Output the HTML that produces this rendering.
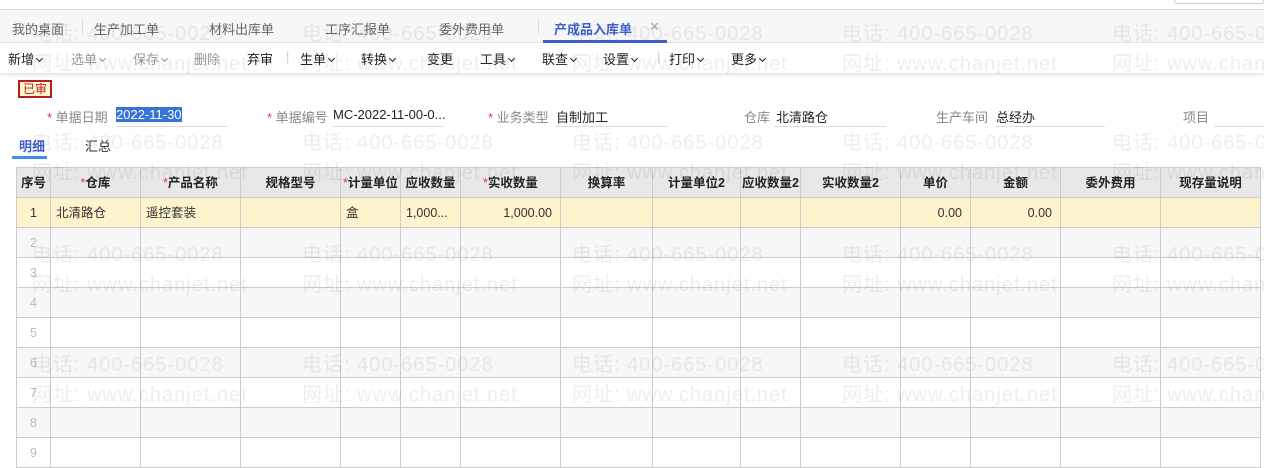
<!DOCTYPE html>
<html><head><meta charset="utf-8"><style>
*{margin:0;padding:0;box-sizing:border-box}
body{width:1264px;height:450px;overflow:hidden;background:#fff;font-family:"Liberation Sans","Noto Sans CJK SC",sans-serif;font-size:13px;color:#333;position:relative}
.top{position:absolute;left:0;top:0;width:1264px;height:10px;background:#fff;border-bottom:1px solid #ddd}
.top .box{position:absolute;right:0;top:-2px;width:90px;height:6px;border:1px solid #ccc;border-radius:3px}
.tabs{position:absolute;top:10px;left:0;width:1264px;height:33px;background:#f7f7f7;border-bottom:1px solid #e4e4e4}
.tab{position:absolute;top:9px;font-size:13px;color:#666}
.tab.act{color:#3f5fcf;font-weight:bold}
.tabline{position:absolute;left:543px;top:30px;width:124px;height:3px;background:#3f5fcf}
.sep{position:absolute;top:8px;width:1px;height:16px;background:#ddd}
.tool{position:absolute;top:43px;left:0;width:1264px;height:30px;background:#fff;box-shadow:0 2px 3px rgba(0,0,0,.12)}
.tool span{position:absolute;top:6px;font-size:13px;color:#222}
.tool span.dis{color:#999}
.chev{display:inline-block;width:5px;height:5px;border-right:1.3px solid currentColor;border-bottom:1.3px solid currentColor;transform:rotate(45deg);margin-left:3px;position:relative;top:-3px}
.badge{position:absolute;left:18px;top:80px;width:34px;height:18px;border:2px solid #b32020;background:#fdf3d0;color:#c02020;font-size:12px;text-align:center;line-height:14px}
.lbl{position:absolute;top:107px;color:#888;font-size:13px}
.lbl b{color:#e33;font-weight:normal}
.val{position:absolute;top:107px;color:#222;font-size:13px}
.ul{position:absolute;top:126px;height:1px;background:#ddd}
.sel{background:#3874d8;color:#fff}
.st{position:absolute;top:136px;font-size:13px}
table{position:absolute;left:16px;top:167px;border-collapse:collapse;table-layout:fixed}
td,th{border:1px solid #ccc;height:30px;padding:0;font-size:12.5px;line-height:14px;overflow:hidden;white-space:nowrap}
th{background:#e8e8e8;font-weight:bold;color:#222}
th i{color:#e33;font-style:normal;font-weight:normal}
tr.r1 td{background:#fdf3cc}
tr.g td{background:#f7f7f7}
td.n{text-align:center;color:#bbb}
tr.r1 td.n{color:#333}
td.rt{text-align:right;padding-right:8px}
td.l{padding-left:5px}
.wm{position:absolute;color:rgba(0,0,0,.07);font-size:20px;letter-spacing:1px;white-space:nowrap;z-index:5;pointer-events:none}
</style></head><body>
<div class="top"><div class="box"></div></div>
<div class="tabs">
<span class="tab" style="left:12px">我的桌面</span><div class="sep" style="left:82px"></div>
<span class="tab" style="left:94px">生产加工单</span>
<span class="tab" style="left:209px">材料出库单</span>
<span class="tab" style="left:325px">工序汇报单</span>
<span class="tab" style="left:439px">委外费用单</span><div class="sep" style="left:538px"></div>
<span class="tab act" style="left:554px">产成品入库单</span><span class="tab" style="left:649px;color:#aaa">✕</span>
<div class="tabline"></div>
</div>
<div class="tool">
<span style="left:8px">新增<i class="chev"></i></span>
<span class="dis" style="left:71px">选单<i class="chev"></i></span>
<span class="dis" style="left:133px">保存<i class="chev"></i></span>
<span class="dis" style="left:194px">删除</span>
<span style="left:247px">弃审</span>
<span style="left:286px;color:#ccc">|</span>
<span style="left:300px">生单<i class="chev"></i></span>
<span style="left:361px">转换<i class="chev"></i></span>
<span style="left:427px">变更</span>
<span style="left:480px">工具<i class="chev"></i></span>
<span style="left:542px">联查<i class="chev"></i></span>
<span style="left:603px">设置<i class="chev"></i></span>
<span style="left:657px;color:#ccc">|</span>
<span style="left:669px">打印<i class="chev"></i></span>
<span style="left:731px">更多<i class="chev"></i></span>
</div>
<div class="badge">已审</div>
<span class="lbl" style="left:47px"><b>*</b> 单据日期</span><span class="val sel" style="left:116px">2022-11-30</span><div class="ul" style="left:116px;width:112px"></div>
<span class="lbl" style="left:267px"><b>*</b> 单据编号</span><span class="val" style="left:333px">MC-2022-11-00-0...</span><div class="ul" style="left:333px;width:110px"></div>
<span class="lbl" style="left:488px"><b>*</b> 业务类型</span><span class="val" style="left:556px">自制加工</span><div class="ul" style="left:555px;width:112px"></div>
<span class="lbl" style="left:744px">仓库</span><span class="val" style="left:776px">北清路仓</span><div class="ul" style="left:775px;width:111px"></div>
<span class="lbl" style="left:936px">生产车间</span><span class="val" style="left:996px">总经办</span><div class="ul" style="left:995px;width:110px"></div>
<span class="lbl" style="left:1183px">项目</span><div class="ul" style="left:1214px;width:50px"></div>
<span class="st" style="left:19px;color:#3f5fcf;font-weight:bold">明细</span>
<span class="st" style="left:85px;color:#333">汇总</span>
<div style="position:absolute;left:12px;top:156px;width:35px;height:3px;background:#3f8fe8"></div>
<table>
<colgroup><col style="width:34px"><col style="width:90px"><col style="width:100px"><col style="width:100px"><col style="width:60px"><col style="width:60px"><col style="width:100px"><col style="width:92px"><col style="width:88px"><col style="width:60px"><col style="width:100px"><col style="width:70px"><col style="width:90px"><col style="width:100px"><col style="width:100px"></colgroup>
<tr><th>序号</th><th><i>*</i>仓库</th><th><i>*</i>产品名称</th><th>规格型号</th><th><i>*</i>计量单位</th><th>应收数量</th><th><i>*</i>实收数量</th><th>换算率</th><th>计量单位2</th><th>应收数量2</th><th>实收数量2</th><th>单价</th><th>金额</th><th>委外费用</th><th>现存量说明</th></tr>
<tr class="r1"><td class="n">1</td><td class="l">北清路仓</td><td class="l">遥控套装</td><td></td><td class="l">盒</td><td class="l">1,000...</td><td class="rt">1,000.00</td><td></td><td></td><td></td><td></td><td class="rt">0.00</td><td class="rt">0.00</td><td></td><td></td></tr>
<tr class="g"><td class="n">2</td><td></td><td></td><td></td><td></td><td></td><td></td><td></td><td></td><td></td><td></td><td></td><td></td><td></td><td></td></tr>
<tr><td class="n">3</td><td></td><td></td><td></td><td></td><td></td><td></td><td></td><td></td><td></td><td></td><td></td><td></td><td></td><td></td></tr>
<tr class="g"><td class="n">4</td><td></td><td></td><td></td><td></td><td></td><td></td><td></td><td></td><td></td><td></td><td></td><td></td><td></td><td></td></tr>
<tr><td class="n">5</td><td></td><td></td><td></td><td></td><td></td><td></td><td></td><td></td><td></td><td></td><td></td><td></td><td></td><td></td></tr>
<tr class="g"><td class="n">6</td><td></td><td></td><td></td><td></td><td></td><td></td><td></td><td></td><td></td><td></td><td></td><td></td><td></td><td></td></tr>
<tr><td class="n">7</td><td></td><td></td><td></td><td></td><td></td><td></td><td></td><td></td><td></td><td></td><td></td><td></td><td></td><td></td></tr>
<tr class="g"><td class="n">8</td><td></td><td></td><td></td><td></td><td></td><td></td><td></td><td></td><td></td><td></td><td></td><td></td><td></td><td></td></tr>
<tr><td class="n">9</td><td></td><td></td><td></td><td></td><td></td><td></td><td></td><td></td><td></td><td></td><td></td><td></td><td></td><td></td></tr>
</table>
<div class="wm" style="left:32px;top:17px">电话: 400-665-0028</div><div class="wm" style="left:32px;top:47px">网址: www.chanjet.net</div>
<div class="wm" style="left:302px;top:17px">电话: 400-665-0028</div><div class="wm" style="left:302px;top:47px">网址: www.chanjet.net</div>
<div class="wm" style="left:572px;top:17px">电话: 400-665-0028</div><div class="wm" style="left:572px;top:47px">网址: www.chanjet.net</div>
<div class="wm" style="left:842px;top:17px">电话: 400-665-0028</div><div class="wm" style="left:842px;top:47px">网址: www.chanjet.net</div>
<div class="wm" style="left:1112px;top:17px">电话: 400-665-0028</div><div class="wm" style="left:1112px;top:47px">网址: www.chanjet.net</div>
<div class="wm" style="left:32px;top:126px">电话: 400-665-0028</div><div class="wm" style="left:32px;top:156px">网址: www.chanjet.net</div>
<div class="wm" style="left:302px;top:126px">电话: 400-665-0028</div><div class="wm" style="left:302px;top:156px">网址: www.chanjet.net</div>
<div class="wm" style="left:572px;top:126px">电话: 400-665-0028</div><div class="wm" style="left:572px;top:156px">网址: www.chanjet.net</div>
<div class="wm" style="left:842px;top:126px">电话: 400-665-0028</div><div class="wm" style="left:842px;top:156px">网址: www.chanjet.net</div>
<div class="wm" style="left:1112px;top:126px">电话: 400-665-0028</div><div class="wm" style="left:1112px;top:156px">网址: www.chanjet.net</div>
<div class="wm" style="left:32px;top:238px">电话: 400-665-0028</div><div class="wm" style="left:32px;top:268px">网址: www.chanjet.net</div>
<div class="wm" style="left:302px;top:238px">电话: 400-665-0028</div><div class="wm" style="left:302px;top:268px">网址: www.chanjet.net</div>
<div class="wm" style="left:572px;top:238px">电话: 400-665-0028</div><div class="wm" style="left:572px;top:268px">网址: www.chanjet.net</div>
<div class="wm" style="left:842px;top:238px">电话: 400-665-0028</div><div class="wm" style="left:842px;top:268px">网址: www.chanjet.net</div>
<div class="wm" style="left:1112px;top:238px">电话: 400-665-0028</div><div class="wm" style="left:1112px;top:268px">网址: www.chanjet.net</div>
<div class="wm" style="left:32px;top:348px">电话: 400-665-0028</div><div class="wm" style="left:32px;top:378px">网址: www.chanjet.net</div>
<div class="wm" style="left:302px;top:348px">电话: 400-665-0028</div><div class="wm" style="left:302px;top:378px">网址: www.chanjet.net</div>
<div class="wm" style="left:572px;top:348px">电话: 400-665-0028</div><div class="wm" style="left:572px;top:378px">网址: www.chanjet.net</div>
<div class="wm" style="left:842px;top:348px">电话: 400-665-0028</div><div class="wm" style="left:842px;top:378px">网址: www.chanjet.net</div>
<div class="wm" style="left:1112px;top:348px">电话: 400-665-0028</div><div class="wm" style="left:1112px;top:378px">网址: www.chanjet.net</div>
</body></html>
